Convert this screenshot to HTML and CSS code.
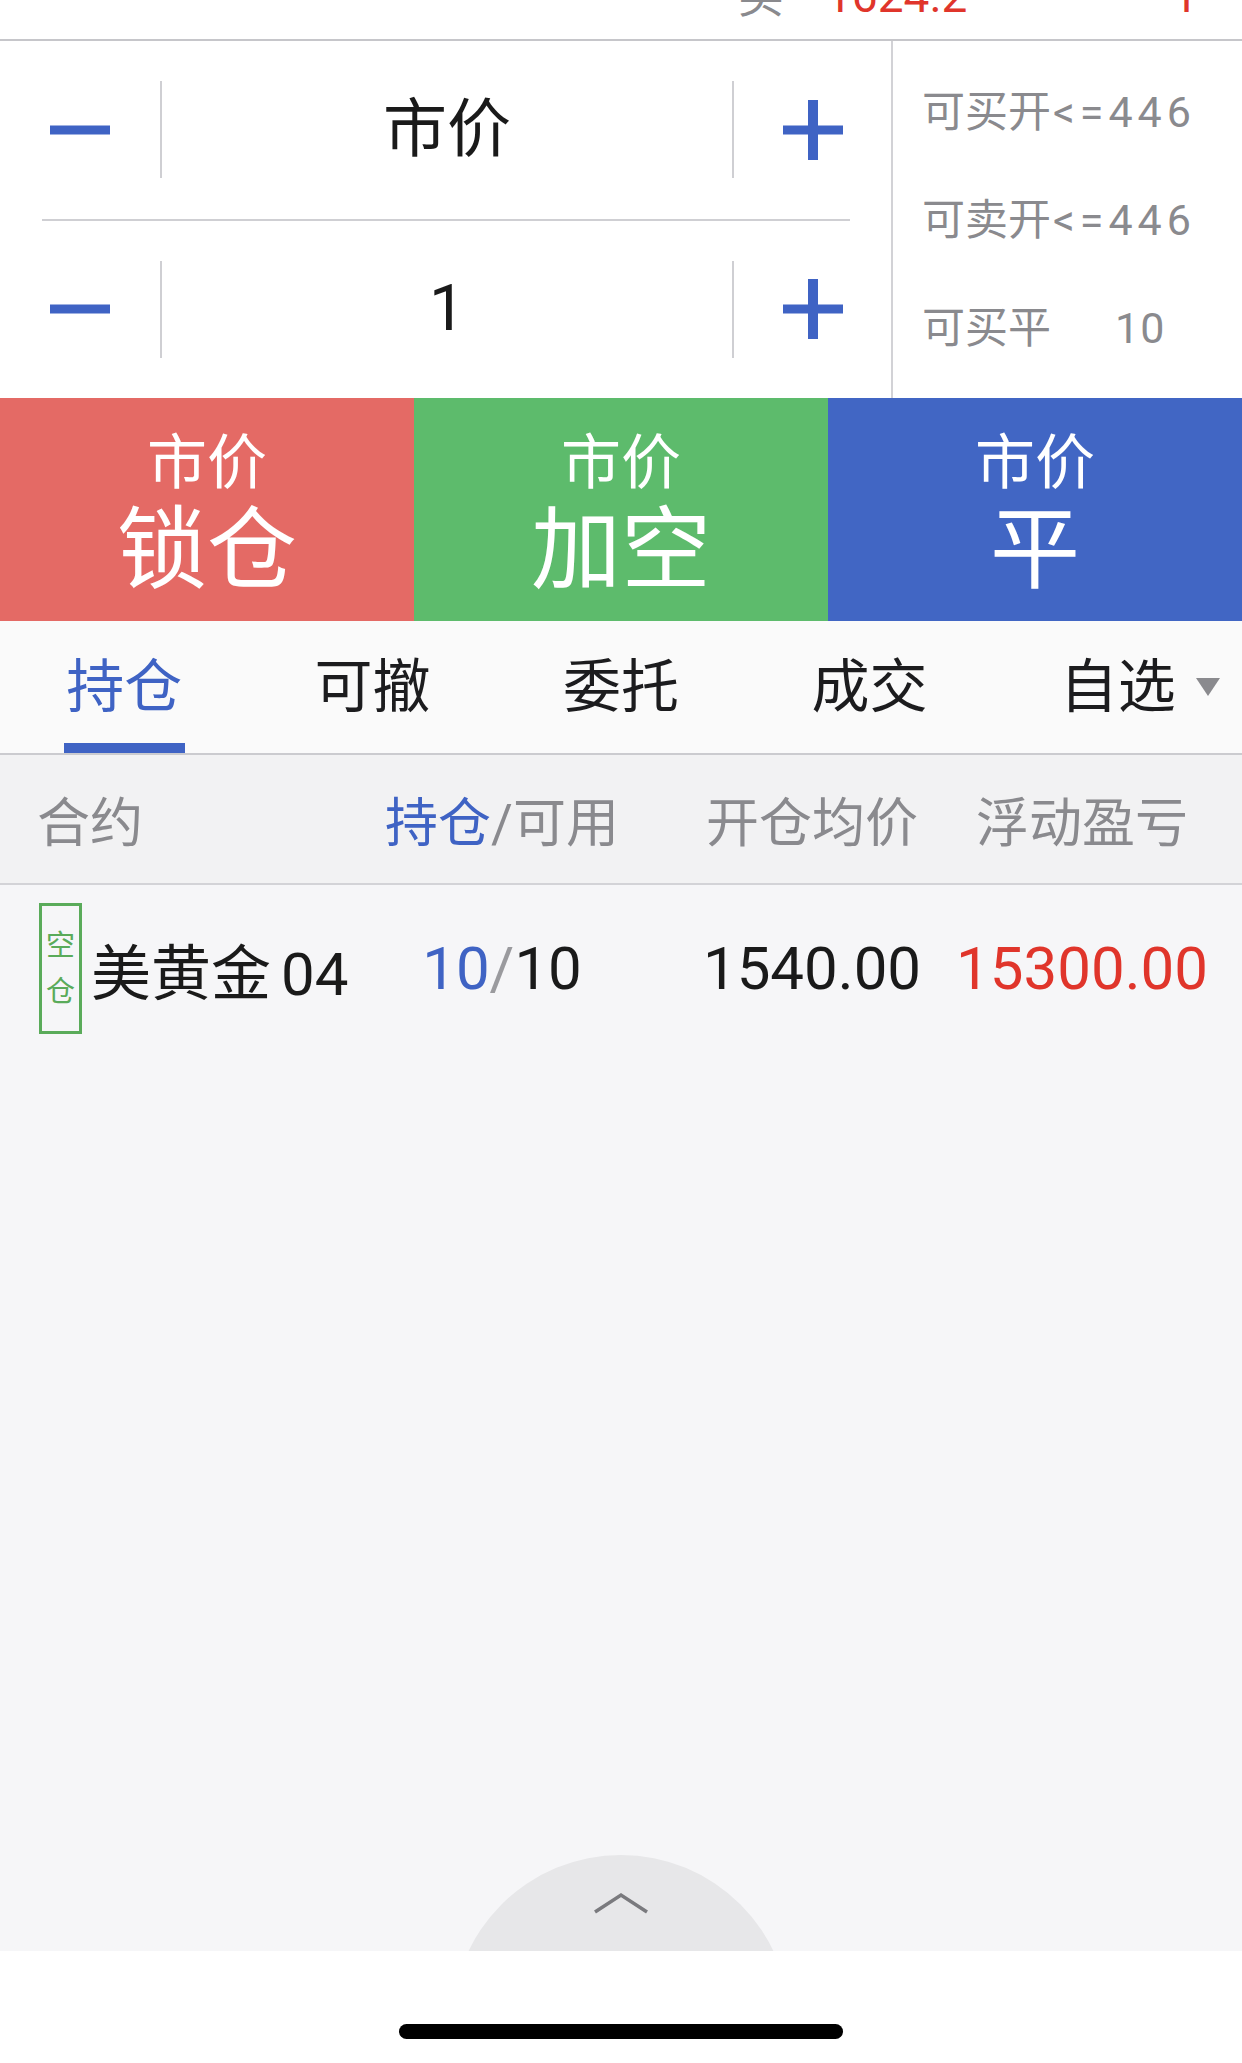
FILE: index.html
```html
<!DOCTYPE html>
<html lang="zh-CN">
<head>
  <meta charset="UTF-8">
  <meta name="viewport" content="width=device-width, initial-scale=1.0">
  <title>持仓</title>
  <link rel="stylesheet" href="styles.css">
</head>
<body>
  <div class="quote-strip">
    <div class="quote-row">
      <span class="q-side">买</span>
      <span class="q-price">1624.2</span>
      <span class="q-vol">1</span>
    </div>
  </div>

  <div class="order-panel">
    <div class="order-left">
      <div class="stepper">
        <div class="step-btn">
          <svg width="60" height="10" viewBox="0 0 60 10"><rect x="0" y="0.5" width="60" height="9" fill="#3f63c4"/></svg>
        </div>
        <span class="vsep"></span>
        <div class="step-value">市价</div>
        <span class="vsep"></span>
        <div class="step-btn">
          <svg width="60" height="60" viewBox="0 0 60 60"><rect x="0" y="25.5" width="60" height="9" fill="#3f63c4"/><rect x="25" y="0" width="10" height="60" fill="#3f63c4"/></svg>
        </div>
      </div>
      <div class="hsep"></div>
      <div class="stepper">
        <div class="step-btn">
          <svg width="60" height="10" viewBox="0 0 60 10"><rect x="0" y="0.5" width="60" height="9" fill="#3f63c4"/></svg>
        </div>
        <span class="vsep"></span>
        <div class="step-value">1</div>
        <span class="vsep"></span>
        <div class="step-btn">
          <svg width="60" height="60" viewBox="0 0 60 60"><rect x="0" y="25.5" width="60" height="9" fill="#3f63c4"/><rect x="25" y="0" width="10" height="60" fill="#3f63c4"/></svg>
        </div>
      </div>
    </div>
    <div class="order-info">
      <div class="info-line">可买开<span class="info-num">&lt;=446</span></div>
      <div class="info-line">可卖开<span class="info-num">&lt;=446</span></div>
      <div class="info-line">可买平<span class="info-num gap">10</span></div>
    </div>
  </div>

  <div class="actions">
    <div class="act act-lock">
      <span class="act-sub">市价</span>
      <span class="act-main">锁仓</span>
    </div>
    <div class="act act-short">
      <span class="act-sub">市价</span>
      <span class="act-main">加空</span>
    </div>
    <div class="act act-close">
      <span class="act-sub">市价</span>
      <span class="act-main">平</span>
    </div>
  </div>

  <div class="tabs">
    <div class="tab active"><span class="tab-label">持仓</span><span class="tab-line"></span></div>
    <div class="tab"><span class="tab-label">可撤</span></div>
    <div class="tab"><span class="tab-label">委托</span></div>
    <div class="tab"><span class="tab-label">成交</span></div>
    <div class="tab"><span class="tab-label">自选<span class="tab-caret"></span></span></div>
  </div>

  <div class="pos-head">
    <div class="col col-name">合约</div>
    <div class="col"><span class="blue">持仓</span>/可用</div>
    <div class="col">开仓均价</div>
    <div class="col">浮动盈亏</div>
  </div>

  <div class="pos-row">
    <div class="col col-name">
      <span class="dir-tag"><span>空</span><span>仓</span></span>
      <span class="contract">美黄金<span class="contract-no">04</span></span>
    </div>
    <div class="col num"><span class="blue">10</span><span class="slash">/</span>10</div>
    <div class="col num">1540.00</div>
    <div class="col num red">15300.00</div>
  </div>

  <div class="filler">
    <div class="pull-handle">
      <div class="pull-circle">
        <svg width="56" height="22" viewBox="0 0 56 22"><polyline points="2,20 28,3 54,20" fill="none" stroke="#7a7a7e" stroke-width="3.5"/></svg>
      </div>
    </div>
  </div>

  <div class="home-area">
    <span class="home-bar"></span>
  </div>
</body>
</html>
```

FILE: styles.css
```css
body {
  margin: 0;
  width: 1242px;
  height: 2063px;
  display: flex;
  flex-direction: column;
  overflow: hidden;
  background: #f6f6f8;
  font-family: Roboto, "Noto Sans CJK SC", sans-serif;
  color: #1c1c1e;
}

.blue {
  color: #3f63c4;
}

.red {
  color: #e0352b;
}

/* cut-off quote row at the very top */
.quote-strip {
  height: 39px;
  background: #fff;
  border-bottom: 2px solid #c6c6ca;
  overflow: hidden;
  flex-shrink: 0;
}

.quote-row {
  display: flex;
  font-size: 46px;
  line-height: 46px;
  margin-top: -27px;
}

.q-side {
  margin-left: 738px;
  color: #8a8a8e;
}

.q-price {
  margin-left: 42px;
  color: #e0352b;
}

.q-vol {
  margin-left: auto;
  margin-right: 44px;
  color: #e0352b;
}

/* order entry */
.order-panel {
  display: flex;
  height: 357px;
  background: #fff;
  flex-shrink: 0;
}

.order-left {
  width: 891px;
  border-right: 2px solid #d2d2d6;
  display: flex;
  flex-direction: column;
}

.stepper {
  flex: 1;
  display: flex;
  align-items: center;
}

.step-btn {
  width: 160px;
  display: flex;
  justify-content: center;
  align-items: center;
}

.step-btn:last-child {
  width: 157px;
}

.vsep {
  width: 2px;
  height: 97px;
  background: #cfcfd3;
}

.step-value {
  flex: 1;
  text-align: center;
  font-size: 64px;
  line-height: 80px;
  color: #1a1a1a;
}

.hsep {
  height: 2px;
  margin: 0 41px 0 42px;
  background: #cfcfd3;
}

.order-info {
  flex: 1;
  display: flex;
  flex-direction: column;
  gap: 58px;
  padding: 46px 0 0 29px;
}

.info-line {
  font-size: 43px;
  line-height: 50px;
  color: #8a8a8e;
  white-space: nowrap;
}

.info-num {
  margin-left: 2px;
  letter-spacing: 5px;
}

.info-num.gap {
  margin-left: 64px;
  letter-spacing: 1px;
}

/* action buttons */
.actions {
  display: flex;
  height: 223px;
  flex-shrink: 0;
}

.act {
  flex: 1;
  display: flex;
  flex-direction: column;
  align-items: center;
  padding-top: 33px;
  color: #fff;
}

.act-lock {
  background: #e46a65;
}

.act-short {
  background: #5dbb6c;
}

.act-close {
  background: #4166c4;
}

.act-sub {
  font-size: 60px;
  line-height: 66px;
}

.act-main {
  font-size: 90px;
  line-height: 100px;
  margin-top: 4px;
}

/* tabs */
.tabs {
  display: flex;
  height: 132px;
  background: #fafafa;
  border-bottom: 2px solid #cbcbcf;
  flex-shrink: 0;
}

.tab {
  flex: 1;
  display: flex;
  flex-direction: column;
  align-items: center;
  padding-top: 34px;
}

.tab-label {
  display: flex;
  align-items: center;
  font-size: 58px;
  line-height: 64px;
  color: #1c1c1e;
}

.tab.active .tab-label {
  color: #3f63c4;
}

.tab-line {
  margin-top: auto;
  width: 121px;
  height: 10px;
  background: #3f63c4;
}

.tab-caret {
  width: 0;
  height: 0;
  margin-left: 20px;
  margin-right: -44px;
  border-left: 12px solid transparent;
  border-right: 12px solid transparent;
  border-top: 18px solid #8a8a8e;
}

/* positions table */
.pos-head,
.pos-row {
  display: grid;
  grid-template-columns: 282px 360px 260px 280px;
  padding: 0 20px 0 40px;
  align-items: center;
  flex-shrink: 0;
}

.pos-head {
  height: 128px;
  background: #f2f2f3;
  border-bottom: 2px solid #d3d3d7;
  font-size: 53px;
  color: #8a8a8e;
}

.pos-head .col-name {
  margin-left: -3px;
}

.col {
  text-align: center;
  white-space: nowrap;
}

.col-name {
  text-align: left;
}

.pos-row {
  padding-top: 18px;
  padding-bottom: 17px;
}

.pos-row .col-name {
  display: flex;
  align-items: center;
}

.dir-tag {
  box-sizing: border-box;
  flex-shrink: 0;
  width: 43px;
  height: 131px;
  margin-left: -1px;
  border: 3px solid #5aab5a;
  display: flex;
  flex-direction: column;
  justify-content: center;
  align-items: center;
  font-size: 29px;
  line-height: 46px;
  color: #5aab5a;
}

.contract {
  flex-shrink: 0;
  margin-left: 9px;
  font-size: 60px;
  color: #1a1a1a;
}

.contract-no {
  margin-left: 10px;
}

.num {
  font-size: 60px;
  color: #1a1a1a;
}

.num.red {
  color: #e0352b;
}

.num .blue {
  color: #3f63c4;
}

.slash {
  color: #9a9a9e;
}

/* empty list area with pull-up handle */
.filler {
  flex: 1;
  display: flex;
  justify-content: center;
  align-items: flex-end;
}

.pull-handle {
  width: 338px;
  height: 96px;
  overflow: hidden;
}

.pull-circle {
  width: 338px;
  height: 338px;
  border-radius: 50%;
  background: #e7e7e9;
  display: flex;
  justify-content: center;
  padding-top: 37px;
  box-sizing: border-box;
}

.home-area {
  height: 112px;
  background: #fff;
  display: flex;
  justify-content: center;
  flex-shrink: 0;
}

.home-bar {
  width: 444px;
  height: 15px;
  margin-top: 73px;
  border-radius: 8px;
  background: #000;
}
```
